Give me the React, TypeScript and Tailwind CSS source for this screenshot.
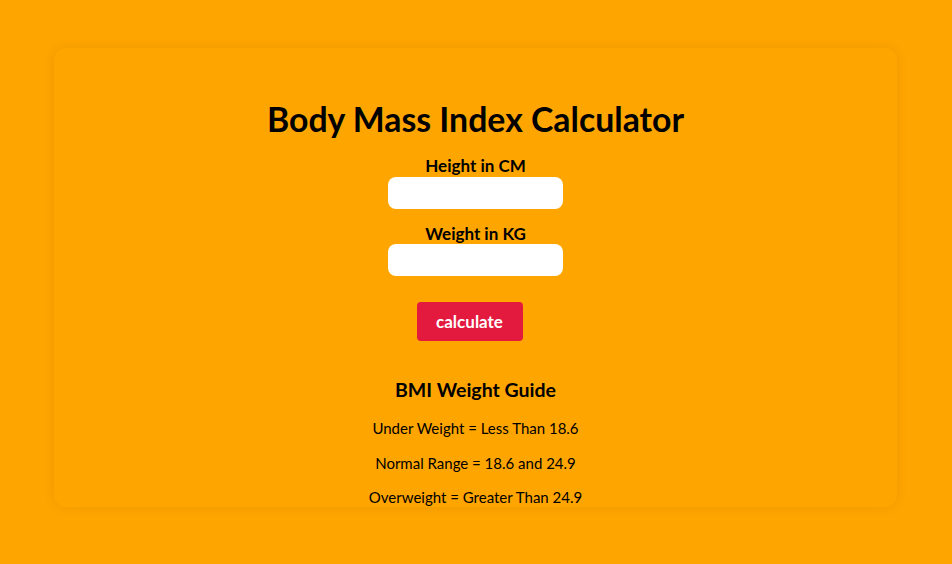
export default function App() {
  return (
    <div className="min-h-screen w-full bg-[#ffa500] pt-12 font-['Lato',sans-serif] text-black">
      <div className="ml-[54px] h-[459px] w-[843px] rounded-xl bg-[#ffa500] shadow-[0_0_12px_rgba(0,0,0,0.08)]">
        <div className="flex flex-col items-center pt-[51px]">
          <h1 className="text-[33.8px] font-bold leading-[40px]">Body Mass Index Calculator</h1>

          <label className="mt-[17px] text-[17px] font-bold leading-[20px]">Height in CM</label>
          <input className="mt-px h-8 w-[175px] rounded-lg bg-white outline-none" />

          <label className="mt-[16px] text-[17px] font-bold leading-[18px]">Weight in KG</label>
          <input className="mt-px h-8 w-[175px] rounded-lg bg-white outline-none" />

          <button className="mt-[26px] mr-[12px] h-[39px] w-[106px] rounded bg-[#e3193e] text-[17px] font-bold text-white">
            calculate
          </button>

          <h2 className="mt-[37px] text-[19.5px] font-bold leading-[24px]">BMI Weight Guide</h2>
          <p className="mt-[16px] text-[15px] leading-[20px]">Under Weight = Less Than 18.6</p>
          <p className="mt-[15px] text-[15px] leading-[20px]">Normal Range = 18.6 and 24.9</p>
          <p className="mt-[14px] text-[15px] leading-[20px]">Overweight = Greater Than 24.9</p>
        </div>
      </div>
    </div>
  );
}
